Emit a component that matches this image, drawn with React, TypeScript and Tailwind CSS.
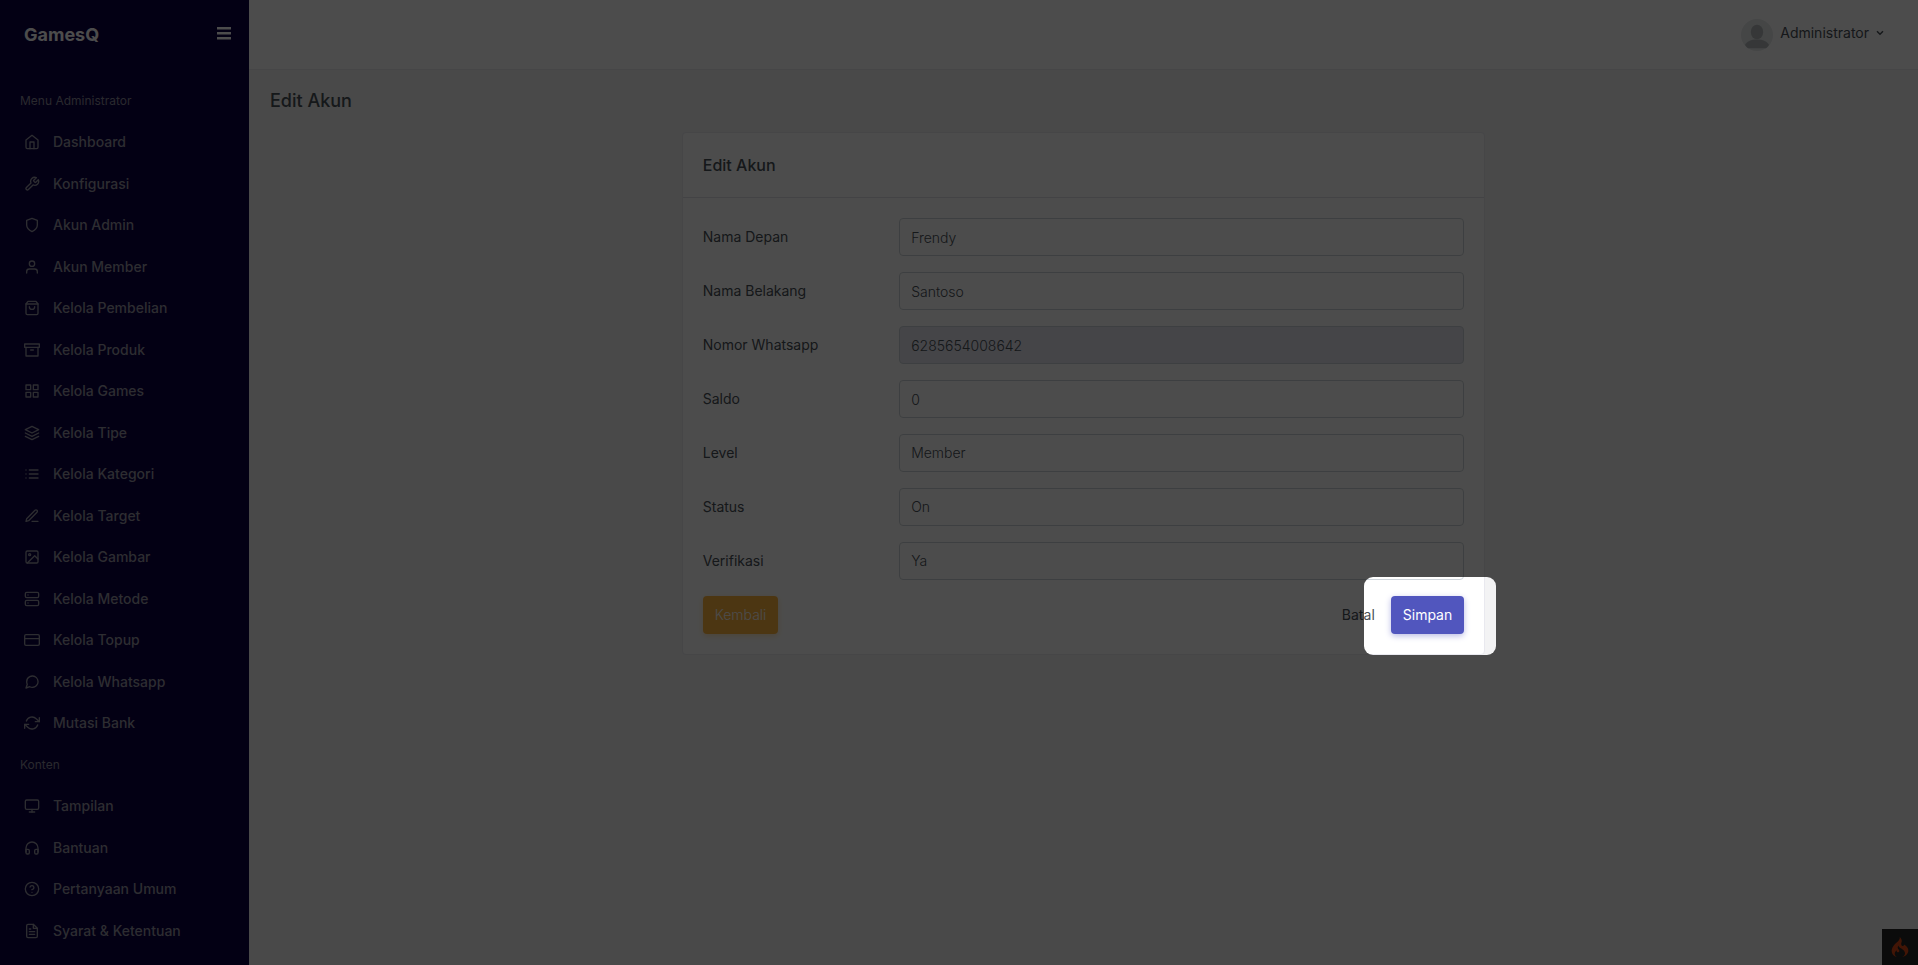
import React from "react";
import {
  FiArchive,
  FiCreditCard,
  FiEdit3,
  FiFileText,
  FiGrid,
  FiHeadphones,
  FiHelpCircle,
  FiHome,
  FiImage,
  FiLayers,
  FiList,
  FiMessageCircle,
  FiMonitor,
  FiRefreshCw,
  FiServer,
  FiShield,
  FiShoppingBag,
  FiTool,
  FiUser,
} from "react-icons/fi";
import { SiCodeigniter } from "react-icons/si";
import type { IconType } from "react-icons";

type MenuItem = { label: string; icon: IconType };

const menus: { title: string; items: MenuItem[] }[] = [
  {
    title: "Menu Administrator",
    items: [
      { label: "Dashboard", icon: FiHome },
      { label: "Konfigurasi", icon: FiTool },
      { label: "Akun Admin", icon: FiShield },
      { label: "Akun Member", icon: FiUser },
      { label: "Kelola Pembelian", icon: FiShoppingBag },
      { label: "Kelola Produk", icon: FiArchive },
      { label: "Kelola Games", icon: FiGrid },
      { label: "Kelola Tipe", icon: FiLayers },
      { label: "Kelola Kategori", icon: FiList },
      { label: "Kelola Target", icon: FiEdit3 },
      { label: "Kelola Gambar", icon: FiImage },
      { label: "Kelola Metode", icon: FiServer },
      { label: "Kelola Topup", icon: FiCreditCard },
      { label: "Kelola Whatsapp", icon: FiMessageCircle },
      { label: "Mutasi Bank", icon: FiRefreshCw },
    ],
  },
  {
    title: "Konten",
    items: [
      { label: "Tampilan", icon: FiMonitor },
      { label: "Bantuan", icon: FiHeadphones },
      { label: "Pertanyaan Umum", icon: FiHelpCircle },
      { label: "Syarat & Ketentuan", icon: FiFileText },
    ],
  },
];

type Field = {
  id: string;
  label: string;
  value: string;
  disabled?: boolean;
  options?: string[];
};

const fields: Field[] = [
  { id: "first_name", label: "Nama Depan", value: "Frendy" },
  { id: "last_name", label: "Nama Belakang", value: "Santoso" },
  { id: "whatsapp", label: "Nomor Whatsapp", value: "6285654008642", disabled: true },
  { id: "balance", label: "Saldo", value: "0" },
  { id: "level", label: "Level", value: "Member", options: ["Member"] },
  { id: "status", label: "Status", value: "On", options: ["On"] },
  { id: "verified", label: "Verifikasi", value: "Ya", options: ["Ya"] },
];

function Sidebar() {
  return (
    <aside className="w-[249px] shrink-0 overflow-hidden bg-[#0b0043]">
      <div className="flex h-[70px] items-center justify-between pr-[18px] pl-6">
        <a href="#" className="text-lg font-bold text-white">
          GamesQ
        </a>
        <button type="button" aria-label="Menu" className="pb-1 text-white">
          <svg viewBox="0 0 14 14" fill="currentColor" className="size-[14px]">
            <path d="M0 1h14v2.500H0zM0 6h14v2.500H0zM0 11h14v2.500H0z" />
          </svg>
        </button>
      </div>
      <nav className="pt-[10px]">
        {menus.map((menu) => (
          <React.Fragment key={menu.title}>
            <h2 className="flex h-[41px] items-center px-5 text-xs text-[#8b8a9b]">{menu.title}</h2>
            <ul>
              {menu.items.map(({ label, icon: Icon }) => (
                <li key={label} className="h-[42px] even:h-[41px]">
                  <a
                    href="#"
                    className="flex h-full items-center gap-[13px] px-6 text-sm font-medium text-[#9796a4]"
                  >
                    <Icon className="size-4" />
                    {label}
                  </a>
                </li>
              ))}
            </ul>
          </React.Fragment>
        ))}
      </nav>
    </aside>
  );
}

function Topbar() {
  return (
    <header className="flex h-[70px] items-center justify-end border-b border-[#e9e9ef] bg-white pr-[34px]">
      <button type="button" className="flex items-center text-sm text-[#495057]">
        <svg viewBox="0 0 32 32" className="mr-[7px] size-8">
          <circle cx="16" cy="16" r="16" fill="#e6eaeb" />
          <ellipse cx="16" cy="13" rx="6.2" ry="7.3" fill="#b5babd" />
          <path
            d="M4 26c1.500-3.500 6-5.500 12-5.500s10.500 2 12 5.500c-1 1.500-2 2.600-3 3.200H7c-1-.6-2-1.700-3-3.200z"
            fill="#b5babd"
          />
        </svg>
        <span className="flex items-center pb-[3px]">
          Administrator
          <svg
            viewBox="0 0 8 8"
            fill="none"
            stroke="currentColor"
            strokeWidth={1.5}
            className="ml-[7px] size-2"
          >
            <path d="M1 2.200l3 3 3-3" />
          </svg>
        </span>
      </button>
    </header>
  );
}

function FormField({ id, label, value, disabled, options }: Field) {
  const control =
    "col-span-3 h-[38px] w-full appearance-none rounded-[4px] border border-[#ced4da] bg-white px-[11px] text-sm font-light text-[#495057] disabled:bg-[#e6e6f0] disabled:opacity-100";

  return (
    <div className="grid grid-cols-4 items-center gap-6">
      <label htmlFor={id} className="text-sm text-[#495057]">
        {label}
      </label>
      {options ? (
        <select id={id} defaultValue={value} className={control}>
          {options.map((option) => (
            <option key={option}>{option}</option>
          ))}
        </select>
      ) : (
        <input id={id} type="text" defaultValue={value} disabled={disabled} className={control} />
      )}
    </div>
  );
}

function EditForm() {
  return (
    <section className="rounded-[4px] border border-[#e9e9ef] bg-white">
      <h2 className="flex h-[65px] items-center border-b border-[#e1e1e6] px-5 text-base font-medium text-[#495057]">
        Edit Akun
      </h2>
      <form className="flex flex-col gap-4 p-5" onSubmit={(e) => e.preventDefault()}>
        {fields.map((field) => (
          <FormField key={field.id} {...field} />
        ))}
        <div className="flex items-center justify-between">
          <button
            type="button"
            className="h-[38px] rounded-[4px] bg-[#ffb53f] px-3 text-sm font-light text-white shadow-[0_2px_6px_0_#ffe5ba]"
          >
            Kembali
          </button>
          <div className="flex items-center gap-1">
            <button type="reset" className="h-[38px] px-3 text-sm text-[#495057]">
              Batal
            </button>
            <div className="relative">
              <button
                type="submit"
                className="h-[38px] rounded-[4px] bg-[#5156be] px-3 text-sm text-white shadow-[0_2px_6px_0_#b9bbe5]"
              >
                Simpan
              </button>
              {/* spotlight: everything outside this box is dimmed */}
              <div className="pointer-events-none absolute -top-[19px] -right-8 -bottom-[21px] -left-[27px] z-50 rounded-[9px] shadow-[0_0_0_3000px_rgba(0,0,0,0.7)]" />
            </div>
          </div>
        </div>
      </form>
    </section>
  );
}

export default function App() {
  return (
    <div className="relative flex h-screen overflow-hidden bg-[#f3f3f4] font-[Inter,sans-serif]">
      <Sidebar />
      <div className="min-w-0 flex-1">
        <Topbar />
        <main className="px-[19px] pt-[17px]">
          <h1 className="pl-0.5 text-lg leading-[27px] font-medium text-[#495057]">Edit Akun</h1>
          <div className="-mx-3 mt-[18px] flex justify-center">
            <div className="w-1/2 px-3">
              <EditForm />
            </div>
          </div>
        </main>
      </div>
      <button
        type="button"
        aria-label="Debug toolbar"
        className="absolute right-0 bottom-0 flex size-9 items-center justify-center bg-[#252525] text-[#dd4814]"
      >
        <SiCodeigniter className="size-5" />
      </button>
    </div>
  );
}
